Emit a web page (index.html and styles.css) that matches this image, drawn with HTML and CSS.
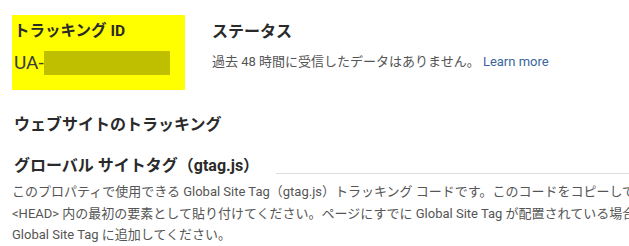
FILE: index.html
```html
<!DOCTYPE html>
<html lang="ja">
<head>
<meta charset="utf-8">
<title>トラッキング コード</title>
<link rel="stylesheet" href="styles.css">
</head>
<body>
<div class="page">
  <div class="top">
    <div class="id-box">
      <div class="id-title">トラッキング ID</div>
      <div class="id-value">UA-<span class="redact"></span></div>
    </div>
    <div class="status">
      <div class="status-title">ステータス</div>
      <div class="status-text">過去 48 時間に受信したデータはありません。 <a class="link" href="#">Learn more</a></div>
    </div>
  </div>
  <div class="section-title">ウェブサイトのトラッキング</div>
  <div class="gtag-head">
    <div class="gtag-title">グローバル サイトタグ（gtag.js）</div>
    <div class="rule"></div>
  </div>
  <p class="desc">このプロパティで使用できる Global Site Tag（gtag.js）トラッキング コードです。このコードをコピーして、トラッキングするすべてのウェブページの<br>&lt;HEAD&gt; 内の最初の要素として貼り付けてください。ページにすでに Global Site Tag が配置されている場合は、config 行のみを既存の<br>Global Site Tag に追加してください。</p>
</div>
</body>
</html>
```
FILE: styles.css
```css
html, body {
  margin: 0;
  padding: 0;
  background: #ffffff;
  overflow: hidden;
}
.page {
  width: 629px;
  height: 246px;
  overflow: hidden;
  font-family: "Roboto", "Noto Sans CJK JP", sans-serif;
  color: #333333;
}
.top {
  display: flex;
  padding: 15px 0 0 12px;
}
.id-box {
  background: #ffff00;
  width: 173px;
  height: 75px;
  padding: 0 0 0 2px;
  box-sizing: border-box;
}
.id-title {
  font-size: 15.5px;
  font-weight: 700;
  line-height: 20px;
  margin-top: 6px;
  color: #2a2a2a;
}
.id-value {
  display: flex;
  align-items: center;
  margin-top: 10px;
  font-size: 19px;
  line-height: 24px;
  color: #3a3a3a;
  white-space: nowrap;
}
.redact {
  display: inline-block;
  width: 126px;
  height: 24px;
  background: #bfbf00;
}
.status {
  margin-left: 27px;
}
.status-title {
  font-size: 16px;
  font-weight: 700;
  line-height: 22px;
  margin-top: 6px;
  color: #2a2a2a;
}
.status-text {
  margin-top: 10px;
  font-size: 13px;
  line-height: 18px;
  color: #555555;
  white-space: nowrap;
}
.link {
  color: #3a659b;
  text-decoration: none;
}
.section-title {
  margin: 24px 0 0 14px;
  font-size: 16px;
  font-weight: 700;
  line-height: 22px;
  color: #2a2a2a;
}
.gtag-head {
  display: flex;
  align-items: flex-end;
  margin: 19px 0 0 14px;
}
.gtag-title {
  font-size: 16px;
  font-weight: 700;
  line-height: 22px;
  color: #2a2a2a;
  white-space: nowrap;
}
.rule {
  flex: 1;
  margin-left: 17px;
  margin-bottom: 3px;
  border-top: 1px solid #dddddd;
}
.desc {
  margin: 4px 0 0 12px;
  width: 700px;
  font-size: 13px;
  line-height: 21.5px;
  color: #555555;
  white-space: nowrap;
}
```
